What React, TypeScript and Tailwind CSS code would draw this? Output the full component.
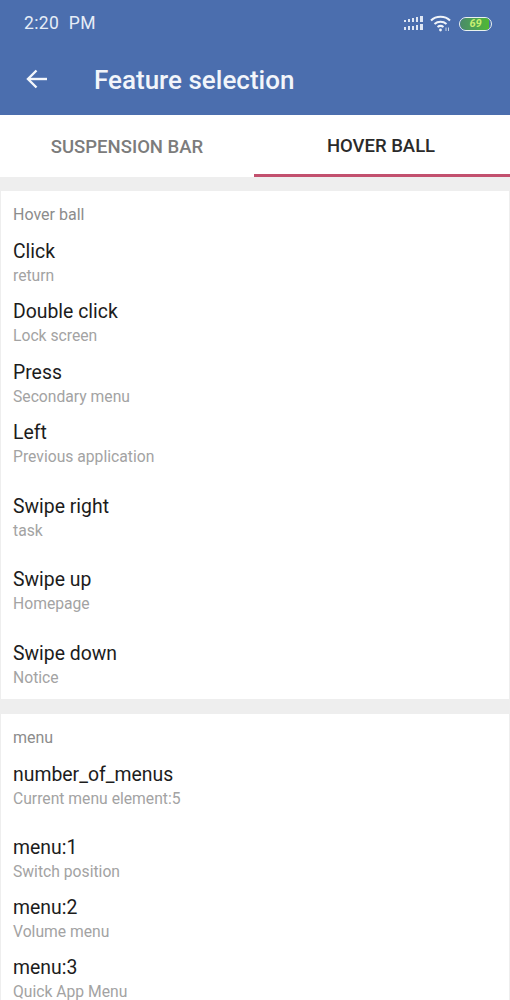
interface RowProps {
    title: string,
    sub: string,
    tall?: boolean,
    after?: string,
}

function Row(data: RowProps) {
    return (
        <div className={`flex flex-col justify-center px-3 pt-1 ${data.tall ? "h-[73.5px]" : "h-[60.33px]"} ${data.after ?? ""}`}>
            <p className="text-[19.4px] leading-6 text-[#1c1c1c]">{data.title}</p>
            <p className="mt-[2px] text-[15.7px] leading-5 text-[#a3a3a3]">{data.sub}</p>
        </div>
    )
}

function StatusIcons() {
    return (
        <div className="flex items-center gap-[7px]">
            <svg width="19" height="15" viewBox="0 0 19 15" fill="#dfe7f4">
                <rect x="0" y="4" width="2" height="2" /><rect x="4" y="3" width="2" height="3" /><rect x="8" y="2" width="2" height="4" /><rect x="12" y="1" width="2" height="5" /><rect x="16" y="0" width="3" height="6" />
                <rect x="0" y="11" width="2" height="3" /><rect x="4" y="10" width="2" height="4" /><rect x="8" y="10" width="2" height="4" /><rect x="12" y="9" width="2" height="5" /><rect x="16" y="8" width="3" height="6" />
            </svg>
            <svg width="22" height="17" viewBox="0 0 22 17" fill="none" stroke="#f0f4fa" strokeWidth="2">
                <path d="M1 5.5 C6 0.5 15 0.5 20 5.5" />
                <path d="M4.5 9 C8 6 13 6 16.5 9" />
                <path d="M7.5 12 C9.5 10.5 11.5 10.5 13.5 12" />
                <circle cx="10.5" cy="15" r="1.4" fill="#f0f4fa" stroke="none" />
                <path d="M16 12.5 V16 M18.5 12.5 V16" stroke="#c5d3e8" strokeWidth="1" />
            </svg>
            <div className="relative flex h-[14px] w-[33px] items-center overflow-hidden rounded-full border-[1.5px] border-[#eaf2ee] bg-[#4b6eae]">
                <div className="h-full w-[29px] rounded-l-full bg-linear-to-r from-[#4a8a68] to-[#4fb82f]"></div>
                <span className="absolute inset-0 flex items-center justify-center text-[11px] font-bold italic leading-none text-[#c8f070]">69</span>
            </div>
        </div>
    )
}

export default function App() {
    return (
        <div className="h-screen w-full overflow-hidden bg-[#eeeeee] font-['Roboto',sans-serif]">
            <header className="h-[115px] bg-[#4b6eae]">
                <div className="flex h-[46px] items-center justify-between pl-6 pr-[18px] pt-[1px]">
                    <span className="text-[17.5px] tracking-[0.4px] text-[#e6edf7]">2:20&nbsp; PM</span>
                    <StatusIcons />
                </div>
                <div className="flex h-[68px] items-center">
                    <svg className="mb-[2px] ml-[26px]" width="22" height="20" viewBox="0 0 22 20" fill="none" stroke="#f4f7fb" strokeWidth="2.4">
                        <path d="M21 10 H2" />
                        <path d="M10.5 1.5 L2 10 L10.5 18.5" />
                    </svg>
                    <h1 className="ml-[46px] text-[26px] font-medium text-[#f2f5fa]">Feature selection</h1>
                </div>
            </header>

            <div className="flex h-[62px] bg-white">
                <div className="flex flex-1 items-center justify-center pt-[3px] text-[18.5px] font-medium text-[#7c7c7c]">SUSPENSION BAR</div>
                <div className="flex flex-1 items-center justify-center border-b-[3px] border-[#c2506e] pr-[2px] pt-[4px] text-[18.5px] font-medium text-[#2a2a2a]">HOVER BALL</div>
            </div>

            <section className="mx-px mt-[14px] h-[508px] overflow-hidden bg-white">
                <h2 className="h-10 px-3 pt-[14px] text-[16px] leading-5 text-[#8c8c8c]">Hover ball</h2>
                <Row title="Click" sub="return" />
                <Row title="Double click" sub="Lock screen" />
                <Row title="Press" sub="Secondary menu" />
                <Row title="Left" sub="Previous application" after="mb-[6.7px]" />
                <Row title="Swipe right" sub="task" tall />
                <Row title="Swipe up" sub="Homepage" tall />
                <Row title="Swipe down" sub="Notice" tall />
            </section>

            <section className="mx-px mt-[15px] bg-white">
                <h2 className="h-[33px] px-3 pt-[14px] text-[16px] leading-5 text-[#8c8c8c]">menu</h2>
                <Row title="number_of_menus" sub="Current menu element:5" tall after="mb-[6px]" />
                <Row title="menu:1" sub="Switch position" />
                <Row title="menu:2" sub="Volume menu" />
                <Row title="menu:3" sub="Quick App Menu" />
            </section>
        </div>
    )
}
